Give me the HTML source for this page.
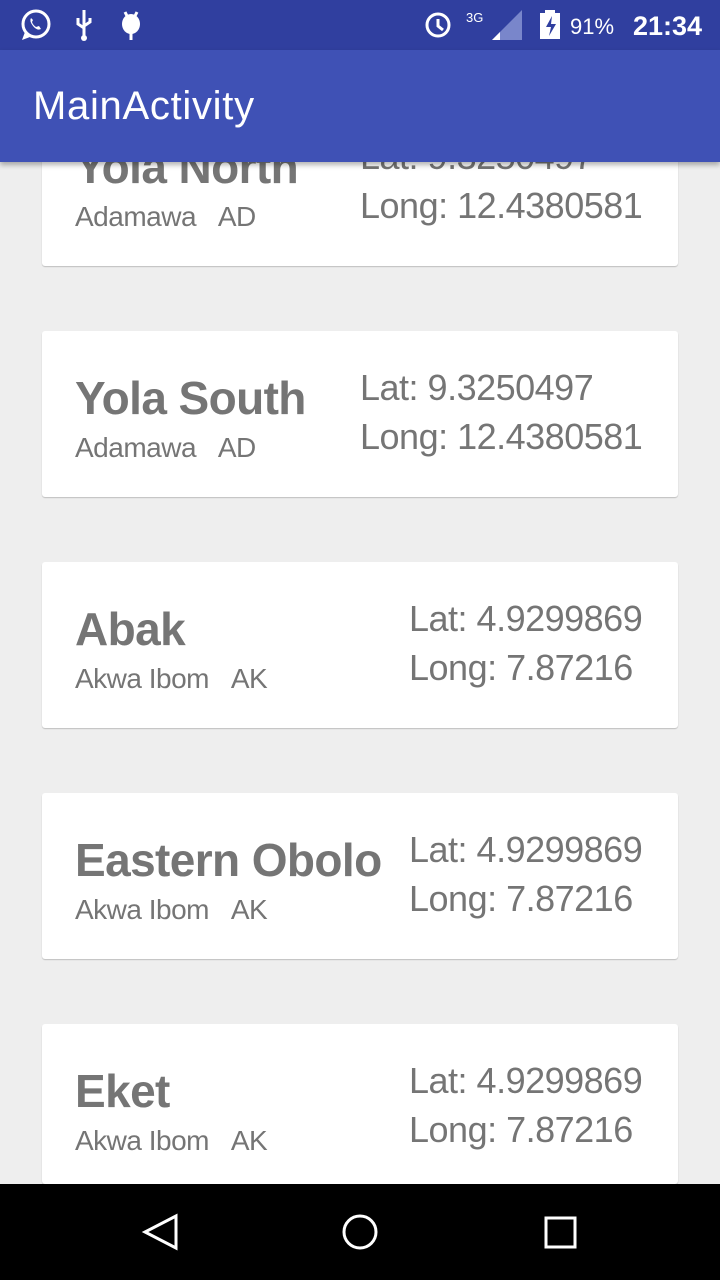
<!DOCTYPE html>
<html><head><meta charset="utf-8"><style>
*{margin:0;padding:0;box-sizing:border-box}
html,body{width:720px;height:1280px;overflow:hidden}
body{background:#eeeeee;font-family:"Liberation Sans",sans-serif;position:relative}
.sb{position:absolute;top:0;left:0;width:720px;height:50px;background:#303f9f;color:#fff}
.ab{position:absolute;top:50px;left:0;width:720px;height:112px;background:#3f51b5;box-shadow:0 3px 5px rgba(0,0,0,.3);z-index:5}
.ab span{position:absolute;left:33px;top:34px;font-size:40px;color:#fff;letter-spacing:0.7px}
.card{position:absolute;left:42px;width:636px;height:166px;background:#fff;border-radius:3px;box-shadow:0 1px 1px rgba(0,0,0,.2)}
.t{position:absolute;left:33px;top:40px;font-size:46px;font-weight:bold;color:#757575;letter-spacing:-0.6px;white-space:nowrap}
.s{position:absolute;left:33px;top:101px;font-size:28px;color:#757575;letter-spacing:-0.5px;white-space:nowrap}
.r{position:absolute;top:32px;font-size:36px;color:#757575;line-height:49px;letter-spacing:-0.5px;white-space:nowrap}
.nav{position:absolute;top:1184px;left:0;width:720px;height:96px;background:#000;z-index:6}
</style></head><body>
<div class="sb">
<svg width="720" height="50" style="position:absolute;left:0;top:0">
<g fill="none" stroke="#fff" stroke-width="3"><circle cx="36" cy="24" r="13"/><circle cx="438" cy="25" r="11"/><path d="M438 19v7l5 4"/></g>
<path d="M22 40l3-8 5 5z" fill="#fff"/>
<path d="M31 18q-2 3 2 8t8 3l-2-3-3 1q-3-2-4-5l1-2z" fill="#fff"/>
<path d="M84 10v28M78 18v6l6 4M90 18v4l-6 4" stroke="#fff" stroke-width="3" fill="none"/><circle cx="84" cy="38" r="3" fill="#fff"/>
<ellipse cx="131" cy="24" rx="9" ry="10" fill="#fff"/><path d="M131 32v8M125 12l2 4M137 12l-2 4" stroke="#fff" stroke-width="3"/>
<text x="466" y="22" font-size="13" fill="#fff" font-family="Liberation Sans">3G</text>
<path d="M492 40l30-30v30z" fill="#7986cb"/><path d="M492 40l8-8v8z" fill="#fff"/>
<rect x="540" y="13" width="20" height="26" fill="#fff"/><rect x="545" y="10" width="10" height="4" fill="#fff"/><path d="M552 16l-6 11h5l-2 9 7-12h-5z" fill="#303f9f"/>
<text x="570" y="34" font-size="22" fill="#fff" font-family="Liberation Sans">91%</text>
<text x="633" y="35" font-size="27" font-weight="bold" fill="#fff" font-family="Liberation Sans">21:34</text>
</svg></div>
<div class="ab"><span>MainActivity</span></div>

<div class="card" style="top:100px"><div class="t">Yola North</div><div class="s">Adamawa&nbsp;&nbsp;&nbsp;AD</div><div class="r" style="left:318px">Lat: 9.3250497<br>Long: 12.4380581</div></div>
<div class="card" style="top:331px"><div class="t">Yola South</div><div class="s">Adamawa&nbsp;&nbsp;&nbsp;AD</div><div class="r" style="left:318px">Lat: 9.3250497<br>Long: 12.4380581</div></div>
<div class="card" style="top:562px"><div class="t">Abak</div><div class="s">Akwa Ibom&nbsp;&nbsp;&nbsp;AK</div><div class="r" style="left:367px">Lat: 4.9299869<br>Long: 7.87216</div></div>
<div class="card" style="top:793px"><div class="t">Eastern Obolo</div><div class="s">Akwa Ibom&nbsp;&nbsp;&nbsp;AK</div><div class="r" style="left:367px">Lat: 4.9299869<br>Long: 7.87216</div></div>
<div class="card" style="top:1024px;height:160px"><div class="t">Eket</div><div class="s">Akwa Ibom&nbsp;&nbsp;&nbsp;AK</div><div class="r" style="left:367px">Lat: 4.9299869<br>Long: 7.87216</div></div>

<div class="nav"><svg width="720" height="96">
<g fill="none" stroke="#fff" stroke-width="3"><path d="M176 32l-31 16 31 16z"/><circle cx="360" cy="48" r="16"/><rect x="546" y="34" width="29" height="29"/></g>
</svg></div>
</body></html>
